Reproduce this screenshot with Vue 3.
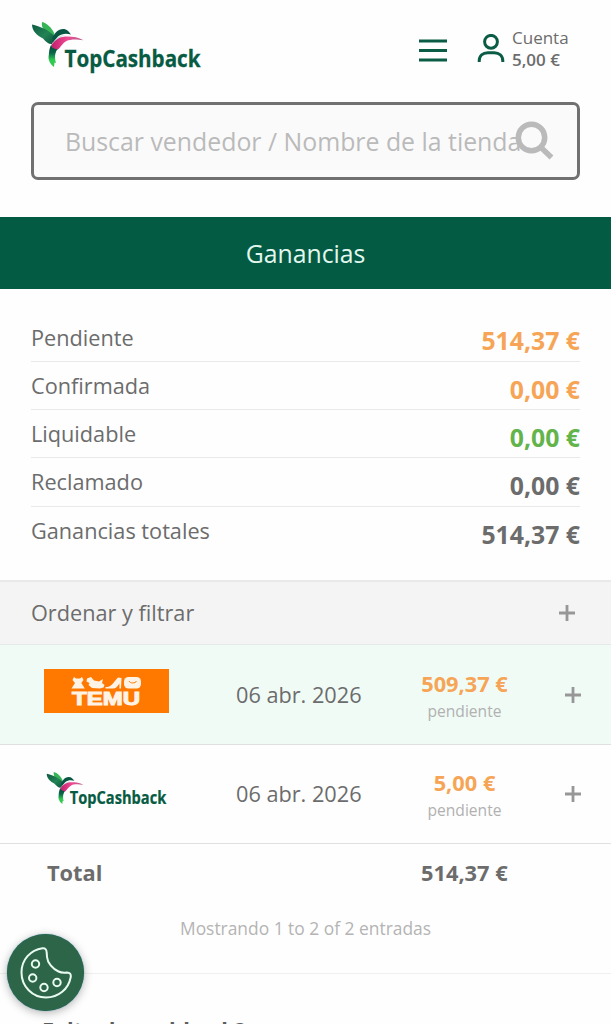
<template>
  <div class="page">
    <header class="header">
      <a class="logo" aria-label="TopCashback">
        <svg viewBox="0 0 172 54">
          <use href="#tcb-logo" />
        </svg>
      </a>
      <button class="menu-btn" aria-label="Menu">
        <svg viewBox="0 0 30 24">
          <path d="M1 2h28M1 11.5h28M1 21h28" />
        </svg>
      </button>
      <div class="account">
        <svg viewBox="0 0 28 30">
          <circle cx="14" cy="7.800" r="6.400" />
          <path d="M2.200 28v-1c0-5.200 3.800-8.300 8.600-8.300h6.400c4.800 0 8.600 3.100 8.600 8.300v1" />
        </svg>
        <div class="account-text">
          <span>Cuenta</span>
          <strong>5,00 €</strong>
        </div>
      </div>
    </header>

    <div class="search">
      <span class="search-text">Buscar vendedor / Nombre de la tienda</span>
      <svg class="search-icon" viewBox="0 0 40 40">
        <circle cx="16.500" cy="16.500" r="13.200" />
        <path d="M25.500 26l11 10.500" />
      </svg>
    </div>

    <h1 class="title">Ganancias</h1>

    <ul class="summary">
      <li v-for="item in summary" :key="item.label">
        <span>{{ item.label }}</span>
        <strong :class="item.color">{{ item.amount }}</strong>
      </li>
    </ul>

    <div class="filter" @click="filter_open = !filter_open">
      <span>Ordenar y filtrar</span>
      <svg class="plus" viewBox="0 0 16 16"><path d="M0 8h16M8 0v16" /></svg>
    </div>

    <div v-for="entry in entries" :key="entry.shop" class="entry" :class="{ tinted: entry.shop === 'temu' }">
      <svg v-if="entry.shop === 'temu'" class="shop-logo temu" viewBox="0 0 125 44">
        <rect width="125" height="44" fill="#ff7900" />
        <g fill="#fff3e6">
          <!-- dress -->
          <path d="M30 8l2 1.500h4l2-1.500 1.500 3-2.200 3 3.500 5.500H27.500l3.500-5.500L28.500 11z" />
          <!-- rocking horse -->
          <path d="M43 9.500l4-1.500 3 3.500 5 1 4-2.500-1 4 2.500 2-1 2.500-3.500 1-8-.5-3.500-3 1-2-3-1.500z" />
          <!-- shoe -->
          <path d="M61.500 18c4.500 0 6.500-2 9-5.500L74 8.500l3.500.5-.5 10.500h-1.600v-5c-2 3-3.600 5-6.400 5h-7.500z" />
          <!-- bag -->
          <rect x="80" y="8" width="17" height="11.500" rx="4.500" />
        </g>
        <path d="M85 12c1 2.600 6.500 2.600 7.500 0" fill="none" stroke="#ff7900" stroke-width="1" />
        <text x="28" y="36" textLength="68" lengthAdjust="spacingAndGlyphs" class="temu-text">TEMU</text>
      </svg>
      <svg v-else class="shop-logo tcb" viewBox="0 0 172 54">
        <use href="#tcb-logo" />
      </svg>
      <span class="date">{{ entry.date }}</span>
      <div class="value">
        <strong>{{ entry.amount }}</strong>
        <small>{{ entry.status }}</small>
      </div>
      <svg class="plus" viewBox="0 0 16 16"><path d="M0 8h16M8 0v16" /></svg>
    </div>

    <div class="total">
      <span>Total</span>
      <span class="total-amount">514,37 €</span>
    </div>
    <p class="showing">Mostrando 1 to 2 of 2 entradas</p>

    <h2 class="missing">Falta de cashback?</h2>

    <button class="cookie" aria-label="Cookies">
      <svg viewBox="0 0 52 52">
        <path d="M22.500 1.200C10.500 3 1.500 12.500 1.500 25.500 1.500 39.500 12.500 50.500 26 50.500c12.500 0 22.500-8.500 24.700-20.300.5-3-1-4.700-3.700-4.700-3 .3-6 .2-8.500-1-6-2.800-11-8.500-11.500-14.500l-.3-4.500c-.2-3-1.500-4.700-4.200-4.300z" />
        <circle cx="15.500" cy="17" r="3.700" />
        <circle cx="12.700" cy="31" r="3.700" />
        <circle cx="24" cy="40.500" r="3.700" />
        <circle cx="37" cy="35.500" r="3.700" />
      </svg>
    </button>

    <!-- logo shared by the header and the entries -->
    <svg class="defs" width="0" height="0">
      <defs>
        <linearGradient id="wing" x1="0" y1="0" x2="1" y2="1">
          <stop offset="0" stop-color="#0c5a42" />
          <stop offset="0.55" stop-color="#238354" />
          <stop offset="1" stop-color="#0b523f" />
        </linearGradient>
        <linearGradient id="tail" x1="0" y1="0" x2="0" y2="1">
          <stop offset="0" stop-color="#073f34" />
          <stop offset="0.4" stop-color="#0b6848" />
          <stop offset="0.7" stop-color="#2fcb50" />
          <stop offset="1" stop-color="#35c553" />
        </linearGradient>
        <linearGradient id="throat" x1="0" y1="0" x2="1" y2="0">
          <stop offset="0" stop-color="#c31d6e" />
          <stop offset="0.5" stop-color="#ee4b93" />
          <stop offset="1" stop-color="#b8608c" />
        </linearGradient>
        <g id="tcb-logo">
          <path d="M11 0c5 1 10 6 12.500 12L21 16 13 8c-2-2.500-2.500-5-2-8z" fill="#36b556" />
          <path d="M1 2.500C9 4.500 18 8 24 14.500L21 22c-3 .5-6-2-9-5.500C6 13.500 1 9 1 2.500z" fill="url(#wing)" />
          <path d="M21.500 15.500C24 11 27 7 32 7c4 0 6 2.500 8 5.500-5-1.500-9-1-13 2l-5.500 7z" fill="#0a5644" />
          <path d="M22 20.500c3-4.500 7-7.500 13-7.500-5 1.500-8 3.500-11.500 8z" fill="#c4dfd4" />
          <path d="M20.500 23c4-6 9-8.500 16-8.500 6 0 11 .8 16 3.700-8-1.200-13-1-17 .8-4.500 2.500-5.500 6-8.500 8.500l-5 .5z" fill="url(#throat)" />
          <path d="M20.500 22c-.5 3 2 5 6 5-2 3-3.500 7-1.500 14l-1.500-.5-.5 4.500c-5-4-6-8-5.200-12 .2-4 .7-7 2.700-11z" fill="url(#tail)" />
          <text x="33.500" y="45" textLength="136" lengthAdjust="spacingAndGlyphs" font-family="'Open Sans', sans-serif" font-weight="700" font-size="24" fill="#075b43" stroke="#075b43" stroke-width="0.300">TopCashback</text>
        </g>
      </defs>
    </svg>
  </div>
</template>

<script setup>
import { ref } from "vue";

const filter_open = ref(false);

const summary = [
  { label: "Pendiente", amount: "514,37 €", color: "orange" },
  { label: "Confirmada", amount: "0,00 €", color: "orange" },
  { label: "Liquidable", amount: "0,00 €", color: "green" },
  { label: "Reclamado", amount: "0,00 €", color: "" },
  { label: "Ganancias totales", amount: "514,37 €", color: "" },
];

const entries = [
  { shop: "temu", date: "06 abr. 2026", amount: "509,37 €", status: "pendiente" },
  { shop: "topcashback", date: "06 abr. 2026", amount: "5,00 €", status: "pendiente" },
];
</script>

<style>
body {
  background: #fefefe;
  overflow: hidden;
}
</style>

<style scoped>
.page {
  box-sizing: border-box;
  height: 1024px;
  overflow: hidden;
  color: #6c6c6c;
  font-family: "Open Sans", "Noto Sans", sans-serif;
}

button {
  padding: 0;
  border: none;
  background: none;
}

svg {
  display: block;
}

.header {
  display: flex;
  align-items: flex-start;
  height: 102px;
  padding: 0 31px;
  box-sizing: border-box;
}

.logo {
  flex: none;
  width: 172px;
  height: 54px;
  margin-top: 22px;
}

.menu-btn {
  flex: none;
  width: 30px;
  height: 24px;
  margin: 39px 0 0 215px;
}

.menu-btn path,
.account path,
.account circle {
  fill: none;
  stroke: #0b5c44;
  stroke-width: 3;
}

.account {
  display: flex;
  margin-left: 29px;
}

.account svg {
  flex: none;
  width: 28px;
  height: 30px;
  margin-top: 34px;
}

.account-text {
  display: flex;
  flex-direction: column;
  margin: 27px 0 0 7px;
  font-size: 17px;
  line-height: 22px;
  white-space: nowrap;
}

.account-text strong {
  font-weight: 600;
}

.search {
  display: flex;
  align-items: center;
  box-sizing: border-box;
  height: 78px;
  margin: 0 31px;
  padding: 0 24px 0 31px;
  border: 3px solid #707070;
  border-radius: 7px;
  background: #fafafa;
}

.search-text {
  color: #bababa;
  font-size: 24.85px;
  white-space: nowrap;
}

.search-icon {
  flex: none;
  width: 40px;
  height: 40px;
  margin-left: -6px;
}

.search-icon circle,
.search-icon path {
  fill: none;
  stroke: #bababa;
  stroke-width: 5.5;
}

.title {
  height: 72px;
  margin: 37px 0 24px;
  background: #045b43;
  color: #e2f7ee;
  font-size: 24.8px;
  font-weight: 400;
  line-height: 73px;
  text-align: center;
}

.summary {
  height: 267px;
  margin: 0;
  padding: 0 31px;
  list-style: none;
}

.summary li {
  display: flex;
  justify-content: space-between;
  box-sizing: border-box;
  height: 48.2px;
  border-bottom: 1.5px solid #e9e9e9;
  font-size: 21.7px;
  line-height: 48px;
}

.summary li:first-child {
  height: 49px;
}

.summary li:first-child span {
  line-height: 50px;
}

.summary li:last-child {
  border-bottom: none;
}

.summary strong {
  font-size: 24.8px;
  line-height: 55px;
}

.orange {
  color: #f6a556;
}

.green {
  color: #62b44b;
}

.filter {
  display: flex;
  align-items: center;
  justify-content: space-between;
  box-sizing: border-box;
  height: 65px;
  padding: 0 36px 1px 31px;
  border-top: 2px solid #e9e9e9;
  border-bottom: 1px solid #e4e8e6;
  background: #f4f4f4;
  font-size: 21.7px;
}

.plus {
  width: 16px;
  height: 16px;
}

.plus path {
  fill: none;
  stroke: #979797;
  stroke-width: 2.8;
}

.entry {
  display: grid;
  grid-template-columns: 182px 125px 153px 16px;
  align-items: center;
  box-sizing: border-box;
  height: 99.5px;
  padding-left: 44px;
  border-bottom: 1.5px solid #e0e0e0;
}

.entry .plus {
  margin: 1px 0 0 61px;
}

.tinted {
  background: #f0fbf6;
}

.temu {
  width: 125px;
  height: 44px;
  margin-top: -6px;
}

.temu-text {
  fill: #fff3e6;
  stroke: #fff3e6;
  stroke-width: 1;
  font-family: "Liberation Sans", sans-serif;
  font-size: 18px;
  font-weight: 700;
}

.tcb {
  width: 122px;
  height: 38.3px;
  margin: -6px 0 0 2px;
}

.date {
  padding-left: 10px;
  font-size: 21.7px;
  white-space: nowrap;
}

.value {
  display: flex;
  flex-direction: column;
  align-items: center;
  margin: 6px 0 0 67px;
  width: 93px;
}

.value strong {
  color: #f6a556;
  font-size: 21.8px;
  line-height: 27px;
  white-space: nowrap;
}

.value small {
  color: #b1b1b1;
  font-size: 15.6px;
  line-height: 28px;
}

.total {
  display: grid;
  grid-template-columns: 374px 1fr;
  padding-left: 47px;
  font-size: 21.8px;
  font-weight: 700;
  line-height: 57px;
}

.showing {
  height: 72px;
  margin: 0;
  border-bottom: 1.5px solid #f0f0f0;
  color: #b4b4b4;
  font-size: 17.4px;
  line-height: 55px;
  text-align: center;
}

.missing {
  margin: 41px 0 0 42px;
  color: #5d5d5d;
  font-size: 21.7px;
  line-height: 30px;
}

/* floats over the page in the bottom left corner */
.cookie {
  position: fixed;
  bottom: 13px;
  left: 7px;
  display: flex;
  align-items: center;
  justify-content: center;
  width: 77px;
  height: 77px;
  border-radius: 50%;
  background: #2c6548;
  box-shadow: 0 2px 10px rgba(0, 0, 0, 0.3), 0 0 1px #1883b5;
}

.cookie svg {
  width: 52px;
  height: 52px;
}

.cookie path,
.cookie circle {
  fill: none;
  stroke: #e9fbf1;
  stroke-width: 2;
}

.defs {
  position: absolute;
}
</style>
